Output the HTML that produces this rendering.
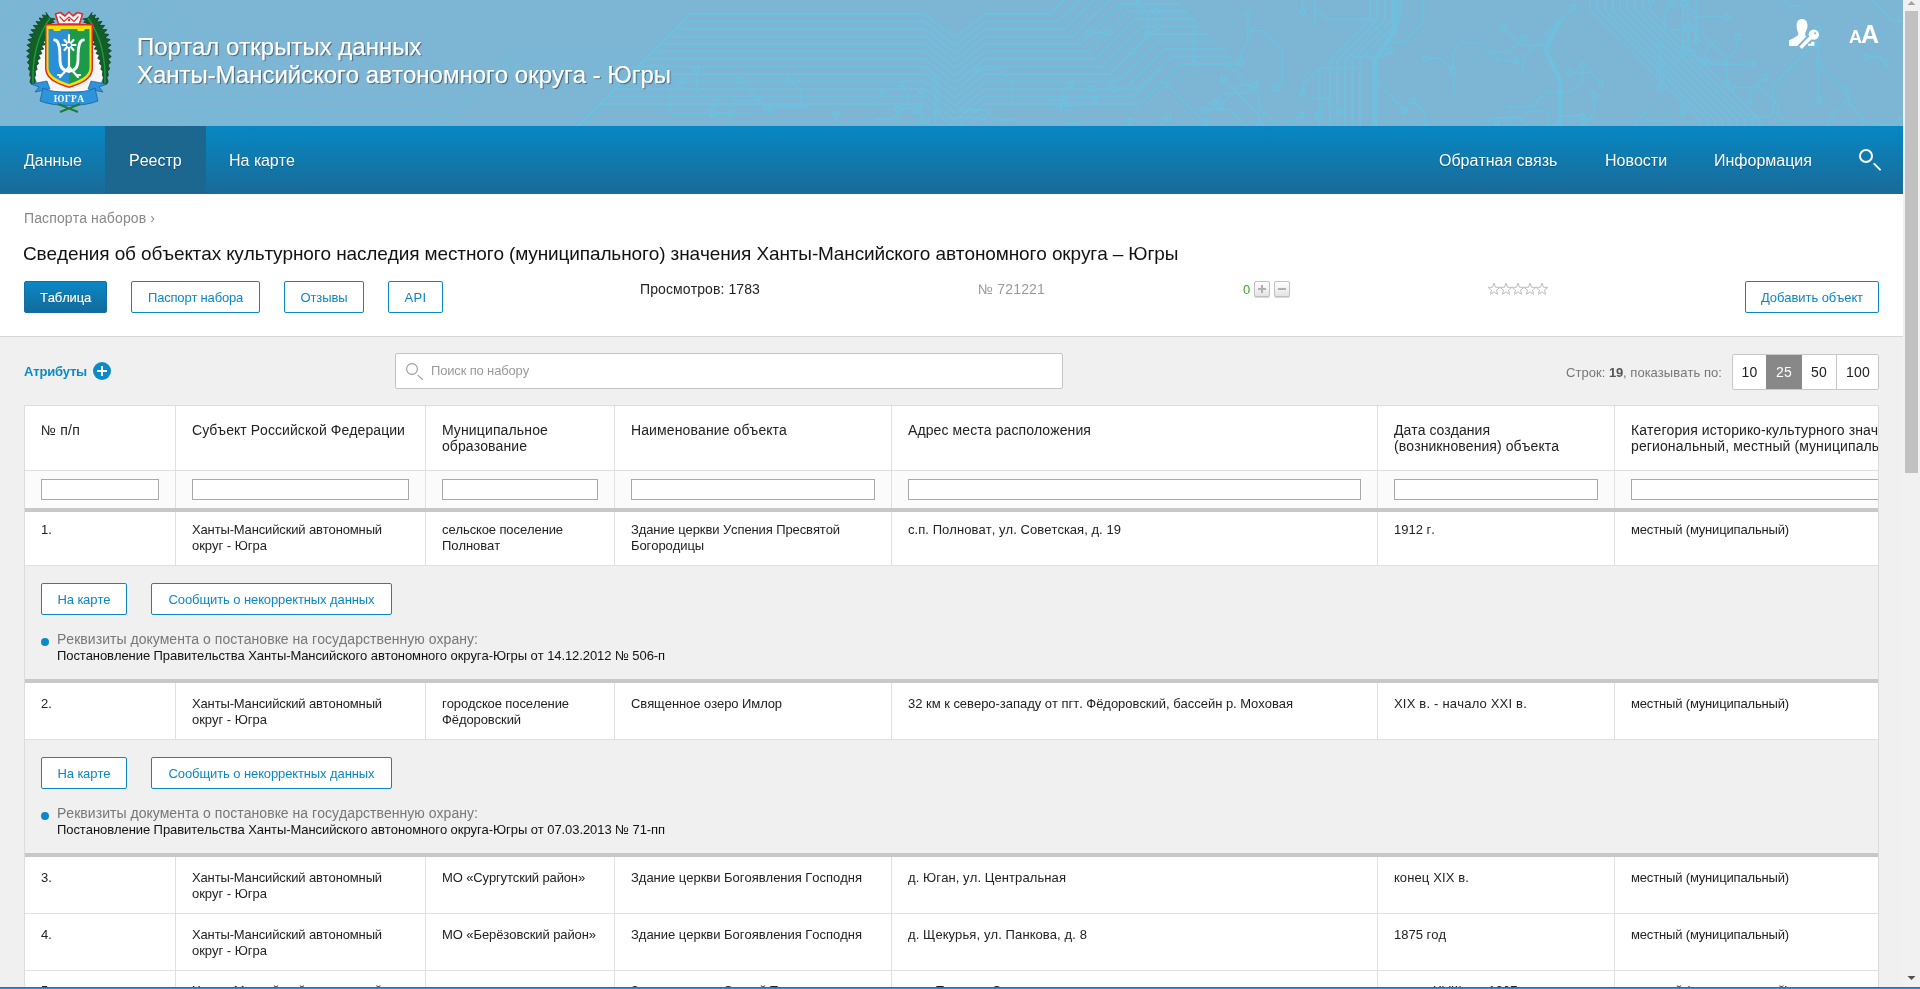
<!DOCTYPE html>
<html><head><meta charset="utf-8">
<style>
*{box-sizing:border-box;margin:0;padding:0}
html,body{width:1920px;height:989px;overflow:hidden;background:#f0f0f0;font-family:"Liberation Sans",sans-serif;color:#222;font-kerning:none}
.abs{position:absolute}
#hdr{position:absolute;left:0;top:0;width:1903px;height:126px;background:#7db5d5;overflow:hidden}
#nav{position:absolute;left:0;top:126px;width:1903px;height:68px;background:linear-gradient(#0787c4,#1a6b97)}
#nav .it{position:absolute;top:1px;height:68px;line-height:68px;font-size:16px;color:#fff;text-shadow:0 1px 1px rgba(0,0,0,.3)}
#top{position:absolute;left:0;top:194px;width:1903px;height:143px;background:#fff;border-bottom:1px solid #d6d6d6}
.btn{position:absolute;height:32px;line-height:31px;border:1px solid #0b87c6;border-radius:2px;color:#0b87c6;font-size:13px;text-align:center;background:#fff}
#sb{position:absolute;left:1903px;top:0;width:17px;height:989px;background:#f1f1f1}
table{border-collapse:collapse}
#tbl{position:absolute;left:24px;top:405px;width:1855px;height:584px;overflow:hidden;border-top:1px solid #dcdcdc;border-left:1px solid #dcdcdc;border-right:1px solid #dcdcdc}
#tbl>div{position:absolute}
#tbl .r{left:0;width:1855px}
#tbl .hl{left:0;width:1855px;height:1px;background:#e0e0e0}
#tbl .vl{width:1px;background:#e0e0e0}
#tbl .tk{left:0;width:1855px;height:4px;background:#c8c8c8}
#tbl .th{font-size:14px;line-height:16px;color:#222;white-space:nowrap}
#tbl .td{font-size:13px;line-height:16px;color:#222;white-space:nowrap}
#tbl .fi{height:21px;border:1px solid #a9a9a9;background:#fff}
#tbl .dot{width:8px;height:8px;border-radius:50%;background:#0a88c8}
#tbl .dl{font-size:14px;line-height:16px;color:#777;white-space:nowrap}
#tbl .dd{font-size:13px;line-height:16px;color:#111;white-space:nowrap}
#tb{position:absolute;left:0;top:337px;width:1903px;height:68px}


.pm{position:absolute;width:16px;height:16px;border:1px solid #c0c0c0;border-radius:2px;background:linear-gradient(#fff,#e4e4e4);box-shadow:0 1px 0 #d8d8d8}
.pm i{position:absolute;background:#b0b0b0}
</style></head><body>
<div id="root" style="position:absolute;left:0;top:0;width:1920px;height:989px;will-change:transform">
<div id="hdr">
<svg class="abs" style="left:0;top:0" width="1903" height="126" viewBox="0 0 1903 126"><g stroke="#6fc0de" stroke-width="1" fill="none" opacity="0.55"><path d="M-144.0,0.0 L-18.0,126.0"/><path d="M-135.0,0.0 L-9.0,126.0"/><path d="M-126.0,0.0 L0.0,126.0"/><path d="M-117.0,0.0 L9.0,126.0"/><path d="M-108.0,0.0 L18.0,126.0"/><path d="M-99.0,0.0 L27.0,126.0"/><path d="M-90.0,0.0 L36.0,126.0"/><path d="M-81.0,0.0 L45.0,126.0"/><path d="M-72.0,0.0 L54.0,126.0"/><path d="M-63.0,0.0 L63.0,126.0"/><path d="M-54.0,0.0 L72.0,126.0"/><path d="M-45.0,0.0 L81.0,126.0"/><path d="M-36.0,0.0 L90.0,126.0"/><path d="M-27.0,0.0 L99.0,126.0"/><path d="M-18.0,0.0 L108.0,126.0"/><path d="M-9.0,0.0 L117.0,126.0"/><path d="M0.0,0.0 L126.0,126.0"/><path d="M9.0,0.0 L135.0,126.0"/><path d="M18.0,0.0 L144.0,126.0"/><path d="M27.0,0.0 L153.0,126.0"/><path d="M36.0,0.0 L162.0,126.0"/><path d="M45.0,0.0 L171.0,126.0"/><path d="M54.0,0.0 L180.0,126.0"/><path d="M63.0,0.0 L189.0,126.0"/><path d="M72.0,0.0 L198.0,126.0"/><path d="M81.0,0.0 L207.0,126.0"/><path d="M90.0,0.0 L216.0,126.0"/><path d="M99.0,0.0 L225.0,126.0"/><path d="M108.0,0.0 L234.0,126.0"/><path d="M117.0,0.0 L243.0,126.0"/><path d="M126.0,0.0 L252.0,126.0"/><path d="M135.0,0.0 L261.0,126.0"/><path d="M144.0,0.0 L270.0,126.0"/><path d="M153.0,0.0 L279.0,126.0"/><path d="M162.0,0.0 L288.0,126.0"/><path d="M171.0,0.0 L297.0,126.0"/><path d="M180.0,0.0 L306.0,126.0"/><path d="M189.0,0.0 L315.0,126.0"/><path d="M198.0,0.0 L324.0,126.0"/><path d="M207.0,0.0 L333.0,126.0"/></g><g stroke="#6fc0de" stroke-width="1.6" fill="none" opacity="0.5"><path d="M140.0,96.0 L470.0,96.0 L520.0,46.0 L640.0,46.0"/><path d="M140.0,103.5 L462.5,103.5 L512.5,53.5 L640.0,53.5"/><path d="M140.0,111.0 L455.0,111.0 L505.0,61.0 L640.0,61.0"/><path d="M140.0,118.5 L447.5,118.5 L497.5,68.5 L640.0,68.5"/><path d="M140.0,126.0 L440.0,126.0 L490.0,76.0 L640.0,76.0"/><path d="M140.0,133.5 L432.5,133.5 L482.5,83.5 L640.0,83.5"/></g><g stroke="#6fc0de" stroke-width="1.8" fill="none"><path d="M620.0,84.0 L690.0,14.0 L925.0,14.0 L955.0,38.0 L985.0,14.0 L1050.0,14.0 L1090.0,-26.0 L1150.0,-26.0"/><path d="M612.5,91.5 L682.5,21.5 L925.0,21.5 L955.0,45.5 L985.0,21.5 L1057.5,21.5 L1097.5,-18.5 L1157.5,-18.5"/><path d="M605.0,99.0 L675.0,29.0 L925.0,29.0 L955.0,53.0 L985.0,29.0 L1065.0,29.0 L1105.0,-11.0 L1165.0,-11.0"/><path d="M597.5,106.5 L667.5,36.5 L925.0,36.5 L955.0,60.5 L985.0,36.5 L1072.5,36.5 L1112.5,-3.5 L1172.5,-3.5"/><path d="M590.0,114.0 L660.0,44.0 L925.0,44.0 L955.0,68.0 L985.0,44.0 L1080.0,44.0 L1120.0,4.0 L1180.0,4.0"/><path d="M582.5,121.5 L652.5,51.5 L925.0,51.5 L955.0,75.5 L985.0,51.5 L1087.5,51.5 L1127.5,11.5 L1187.5,11.5"/><path d="M575.0,129.0 L645.0,59.0 L925.0,59.0 L955.0,83.0 L985.0,59.0 L1095.0,59.0 L1135.0,19.0 L1195.0,19.0"/><path d="M567.5,136.5 L637.5,66.5 L925.0,66.5 L955.0,90.5 L985.0,66.5 L1102.5,66.5 L1142.5,26.5 L1202.5,26.5"/><path d="M560.0,144.0 L630.0,74.0 L925.0,74.0 L955.0,98.0 L985.0,74.0 L1110.0,74.0 L1150.0,34.0 L1210.0,34.0"/><path d="M552.5,151.5 L622.5,81.5 L925.0,81.5 L955.0,105.5 L985.0,81.5 L1117.5,81.5 L1157.5,41.5 L1217.5,41.5"/><path d="M545.0,159.0 L615.0,89.0 L925.0,89.0 L955.0,113.0 L985.0,89.0 L1125.0,89.0 L1165.0,49.0 L1225.0,49.0"/><path d="M537.5,166.5 L607.5,96.5 L925.0,96.5 L955.0,120.5 L985.0,96.5 L1132.5,96.5 L1172.5,56.5 L1232.5,56.5"/><path d="M530.0,174.0 L600.0,104.0 L925.0,104.0 L955.0,128.0 L985.0,104.0 L1140.0,104.0 L1180.0,64.0 L1240.0,64.0"/><path d="M1590.0,0.0 L1590.0,10.0 L1700.0,120.0 L1700.0,126.0"/><path d="M1597.5,0.0 L1597.5,10.0 L1707.5,120.0 L1707.5,126.0"/><path d="M1605.0,0.0 L1605.0,10.0 L1715.0,120.0 L1715.0,126.0"/><path d="M1612.5,0.0 L1612.5,10.0 L1722.5,120.0 L1722.5,126.0"/><path d="M1620.0,0.0 L1620.0,10.0 L1730.0,120.0 L1730.0,126.0"/><path d="M1627.5,0.0 L1627.5,10.0 L1737.5,120.0 L1737.5,126.0"/><path d="M1635.0,0.0 L1635.0,10.0 L1745.0,120.0 L1745.0,126.0"/><path d="M1642.5,0.0 L1642.5,10.0 L1752.5,120.0 L1752.5,126.0"/><path d="M1650.0,0.0 L1650.0,10.0 L1760.0,120.0 L1760.0,126.0"/><path d="M1330.0,126.0 L1330.0,60.0 L1370.0,20.0 L1370.0,-2.0"/><path d="M1337.5,126.0 L1337.5,60.0 L1377.5,20.0 L1377.5,-2.0"/><path d="M1345.0,126.0 L1345.0,60.0 L1385.0,20.0 L1385.0,-2.0"/><path d="M1352.5,126.0 L1352.5,60.0 L1392.5,20.0 L1392.5,-2.0"/><path d="M1360.0,126.0 L1360.0,60.0 L1400.0,20.0 L1400.0,-2.0"/><path d="M1452.9,70.5 L1452.9,51.4 L1461.5,42.7 L1479.9,42.7 L1497.9,60.7 L1515.8,60.7"/><path d="M1731.5,87.4 L1760.7,87.4 L1777.9,104.5 L1777.9,116.0 L1796.5,134.6"/><path d="M1248.4,30.5 L1263.5,30.5 L1282.3,49.2 L1282.3,62.4 L1282.3,81.4 L1275.3,88.4"/><path d="M1878.2,125.5 L1893.1,125.5 L1906.7,111.8"/><path d="M1697.7,50.5 L1688.2,50.5 L1669.4,69.3 L1669.4,82.0 L1682.4,95.0 L1682.4,111.7"/><path d="M1254.8,85.0 L1240.0,85.0 L1219.3,105.7"/><path d="M1651.5,1.4 L1651.5,-10.5"/><path d="M1496.9,124.1 L1496.9,146.3"/><path d="M1872.2,0.1 L1893.4,21.2 L1906.1,21.2"/><path d="M1569.6,72.7 L1582.3,72.7 L1590.5,72.7 L1601.3,83.5"/><path d="M1157.9,26.3 L1152.0,32.2 L1140.6,43.6 L1133.0,51.3"/><path d="M1548.2,109.2 L1548.2,124.0 L1566.5,142.4"/><path d="M1223.6,79.3 L1240.0,95.6 L1259.3,115.0 L1259.3,124.7"/><path d="M1130.2,121.3 L1130.2,135.0"/><path d="M1505.7,117.1 L1518.7,117.1 L1534.5,132.9"/><path d="M1318.6,115.6 L1318.6,125.1 L1318.6,142.9"/><path d="M1319.9,66.9 L1319.9,82.9 L1319.9,112.4"/><path d="M1507.1,119.3 L1527.1,139.3"/><path d="M1646.8,121.3 L1665.4,121.3 L1675.9,131.8"/><path d="M1158.7,68.8 L1139.0,88.5 L1114.8,88.5"/><path d="M1813.7,44.3 L1794.0,64.0 L1773.7,84.3 L1773.7,111.3 L1767.8,117.2 L1751.4,117.2"/><path d="M1156.4,11.4 L1183.7,11.4 L1194.5,22.2 L1194.5,45.5 L1194.5,63.2"/><path d="M1685.2,3.8 L1698.3,16.9 L1727.4,16.9"/><path d="M1579.3,116.0 L1563.2,116.0 L1547.0,132.2"/><path d="M1687.9,43.2 L1687.9,15.5 L1687.9,-1.4 L1687.9,-13.7"/><path d="M1688.6,25.2 L1688.6,38.1 L1688.6,50.7 L1702.0,64.1 L1725.6,64.1 L1751.7,64.1"/><path d="M1314.6,27.0 L1314.6,5.2 L1314.6,-17.6"/><path d="M1866.0,57.0 L1880.1,57.0 L1886.4,63.3"/><path d="M1376.3,81.8 L1391.9,97.4 L1404.6,110.2"/><path d="M1307.8,98.2 L1325.6,98.2 L1339.6,112.2"/><path d="M1847.6,86.2 L1847.6,99.9 L1841.8,105.7 L1827.8,119.7 L1827.8,131.6"/><path d="M1521.0,119.3 L1532.7,131.1"/><path d="M1168.0,117.5 L1160.3,125.2 L1151.6,133.9"/><path d="M1543.7,110.8 L1528.5,110.8 L1521.3,118.0 L1493.0,118.0 L1484.0,127.0 L1463.1,147.9"/><path d="M1716.8,40.4 L1705.7,51.4 L1705.7,60.3"/><path d="M1699.2,61.4 L1725.0,61.4 L1737.4,49.1 L1737.4,37.3"/><path d="M1814.5,59.3 L1834.9,79.7 L1849.5,94.3 L1849.5,104.2 L1862.0,116.7 L1862.0,131.1"/><path d="M1228.2,64.8 L1238.7,75.3 L1259.2,95.8 L1259.2,108.4 L1279.9,129.1"/><path d="M1488.2,51.8 L1509.5,51.8 L1523.5,37.8"/><path d="M1412.5,100.9 L1425.8,114.2 L1425.8,125.9"/><path d="M1818.2,100.8 L1818.2,87.4 L1818.2,76.6 L1818.2,48.8 L1818.2,29.3"/><path d="M1582.0,116.6 L1582.0,125.4 L1591.2,134.6"/><path d="M1664.4,30.8 L1664.4,11.8 L1672.0,4.2"/><path d="M1659.8,88.4 L1659.8,72.1 L1659.8,46.0"/><path d="M1259.3,79.5 L1245.4,93.4 L1224.0,93.4 L1214.7,102.7"/><path d="M1371.1,22.8 L1390.6,42.3 L1403.4,42.3 L1422.9,22.9 L1422.9,-4.7"/><path d="M1302.4,12.2 L1302.4,-0.2 L1318.7,-16.5"/><path d="M1544.5,45.1 L1521.0,45.1 L1503.6,27.6"/><path d="M1749.7,101.2 L1749.7,92.6 L1764.9,77.4"/><path d="M1247.9,14.5 L1247.9,44.3 L1240.7,51.4 L1240.7,62.4"/><path d="M1696.5,41.2 L1696.5,21.8 L1696.5,9.2 L1696.5,0.9 L1702.8,-5.4"/><path d="M1454.1,93.2 L1454.1,71.8 L1440.5,58.2 L1425.3,58.2"/><path d="M1649.6,108.5 L1635.1,123.0 L1635.1,142.1"/><path d="M1301.4,114.8 L1283.1,133.2"/><path d="M1357.3,67.9 L1332.5,67.9 L1319.9,67.9 L1313.2,74.7 L1302.8,85.0 L1302.8,93.2"/><path d="M1804.1,6.2 L1788.7,6.2 L1776.7,-5.7"/><path d="M1403.9,126.0 L1387.3,142.6"/><path d="M1117.8,77.5 L1108.2,87.2 L1094.6,100.7"/><path d="M1108.4,32.6 L1088.3,32.6"/><path d="M1506.1,106.6 L1531.9,106.6 L1546.1,92.4 L1570.8,92.4 L1582.5,80.8 L1582.5,64.3"/><path d="M1522.7,75.2 L1522.7,57.9 L1534.6,46.1 L1545.9,34.7 L1559.1,21.5 L1573.5,7.2"/><path d="M1683.2,3.4 L1683.2,25.3 L1683.2,49.9"/><path d="M1345.8,50.1 L1352.6,56.9 L1370.1,56.9 L1383.6,56.9 L1389.9,50.6"/><path d="M1663.7,59.0 L1663.7,68.1 L1663.7,86.1"/><path d="M1378.2,19.5 L1367.1,19.5 L1349.1,19.5 L1327.1,19.5 L1314.9,7.3 L1314.9,-12.4"/><path d="M1672.7,30.0 L1698.0,30.0 L1716.8,48.9 L1726.7,58.7 L1726.7,82.7"/><path d="M1593.8,94.9 L1593.8,114.0 L1573.9,133.9"/><path d="M1147.4,34.1 L1147.4,12.4 L1138.3,3.3"/><path d="M1167.4,85.2 L1182.9,100.7 L1196.1,113.9 L1205.0,122.8"/><path d="M1204.0,109.6 L1229.8,109.6 L1248.5,128.3 L1266.3,128.3 L1276.0,137.9"/><path d="M947.6,125.6 L930.3,125.6 L914.7,110.0"/><path d="M848.2,103.3 L871.0,103.3 L883.2,91.1"/><path d="M908.3,107.5 L908.3,94.4 L901.7,87.8"/><path d="M1060.7,111.7 L1060.7,95.3 L1070.3,85.7"/><path d="M756.3,113.7 L732.8,113.7 L712.8,113.7"/><path d="M921.7,122.5 L921.7,107.0 L921.7,91.2"/><path d="M835.8,123.6 L835.8,114.2"/><path d="M670.6,114.4 L670.6,92.8 L683.0,80.4"/><path d="M897.8,120.1 L897.8,109.1"/><path d="M1047.6,100.1 L1064.4,100.1"/><path d="M729.8,100.7 L752.1,100.7 L761.2,100.7 L770.5,110.0"/><path d="M697.0,92.9 L697.0,69.7"/><path d="M671.4,113.5 L693.3,113.5 L705.5,113.5 L717.0,102.0"/><path d="M808.8,106.5 L787.1,106.5 L767.6,106.5"/><path d="M874.7,119.0 L893.2,119.0 L903.8,108.4 L917.8,108.4"/><path d="M1014.6,120.0 L995.7,120.0 L985.7,110.0 L964.1,110.0"/><path d="M1066.4,123.0 L1077.1,123.0 L1087.3,133.1"/><path d="M801.2,104.0 L801.2,91.4 L789.9,80.0"/><path d="M710.5,113.3 L731.3,113.3"/><path d="M917.0,122.7 L926.8,122.7 L936.8,112.8"/><path d="M763.6,115.8 L763.6,104.0 L747.2,87.6 L739.4,79.9"/><path d="M935.8,123.9 L935.8,101.4 L935.8,78.3"/><path d="M950.5,117.8 L973.2,117.8 L982.0,117.8"/><path d="M1012.6,103.9 L1012.6,82.7 L999.1,69.1 L975.9,69.1"/><path d="M1058.3,106.2 L1073.5,106.2 L1084.1,95.5 L1091.5,88.1"/></g><g stroke="#6fc0de" stroke-width="5" fill="none" stroke-linejoin="round"><path d="M1395.0,0.0 L1395.0,30.0 L1375.0,60.0 L1375.0,126.0"/><path d="M1560.0,20.0 L1545.0,50.0 L1560.0,80.0 L1560.0,126.0"/></g><g fill="#6fc0de"><circle cx="1515.8" cy="60.7" r="3.6"/><circle cx="1452.9" cy="70.5" r="3.6"/><circle cx="1796.5" cy="134.6" r="3.6"/><circle cx="1731.5" cy="87.4" r="3.6"/><circle cx="1275.3" cy="88.4" r="3.6"/><circle cx="1248.4" cy="30.5" r="3.6"/><circle cx="1906.7" cy="111.8" r="3.6"/><circle cx="1878.2" cy="125.5" r="3.6"/><circle cx="1682.4" cy="111.7" r="3.6"/><circle cx="1219.3" cy="105.7" r="3.6"/><circle cx="1254.8" cy="85.0" r="3.6"/><circle cx="1651.5" cy="-10.5" r="3.6"/><circle cx="1651.5" cy="1.4" r="3.6"/><circle cx="1496.9" cy="146.3" r="3.6"/><circle cx="1496.9" cy="124.1" r="3.6"/><circle cx="1906.1" cy="21.2" r="3.6"/><circle cx="1601.3" cy="83.5" r="3.6"/><circle cx="1569.6" cy="72.7" r="3.6"/><circle cx="1133.0" cy="51.3" r="3.6"/><circle cx="1157.9" cy="26.3" r="3.6"/><circle cx="1566.5" cy="142.4" r="3.6"/><circle cx="1259.3" cy="124.7" r="3.6"/><circle cx="1223.6" cy="79.3" r="3.6"/><circle cx="1130.2" cy="135.0" r="3.6"/><circle cx="1130.2" cy="121.3" r="3.6"/><circle cx="1534.5" cy="132.9" r="3.6"/><circle cx="1318.6" cy="142.9" r="3.6"/><circle cx="1318.6" cy="115.6" r="3.6"/><circle cx="1319.9" cy="112.4" r="3.6"/><circle cx="1527.1" cy="139.3" r="3.6"/><circle cx="1675.9" cy="131.8" r="3.6"/><circle cx="1114.8" cy="88.5" r="3.6"/><circle cx="1751.4" cy="117.2" r="3.6"/><circle cx="1813.7" cy="44.3" r="3.6"/><circle cx="1194.5" cy="63.2" r="3.6"/><circle cx="1156.4" cy="11.4" r="3.6"/><circle cx="1727.4" cy="16.9" r="3.6"/><circle cx="1685.2" cy="3.8" r="3.6"/><circle cx="1547.0" cy="132.2" r="3.6"/><circle cx="1687.9" cy="-13.7" r="3.6"/><circle cx="1751.7" cy="64.1" r="3.6"/><circle cx="1688.6" cy="25.2" r="3.6"/><circle cx="1314.6" cy="-17.6" r="3.6"/><circle cx="1886.4" cy="63.3" r="3.6"/><circle cx="1866.0" cy="57.0" r="3.6"/><circle cx="1404.6" cy="110.2" r="3.6"/><circle cx="1339.6" cy="112.2" r="3.6"/><circle cx="1827.8" cy="131.6" r="3.6"/><circle cx="1532.7" cy="131.1" r="3.6"/><circle cx="1151.6" cy="133.9" r="3.6"/><circle cx="1168.0" cy="117.5" r="3.6"/><circle cx="1463.1" cy="147.9" r="3.6"/><circle cx="1705.7" cy="60.3" r="3.6"/><circle cx="1737.4" cy="37.3" r="3.6"/><circle cx="1862.0" cy="131.1" r="3.6"/><circle cx="1279.9" cy="129.1" r="3.6"/><circle cx="1228.2" cy="64.8" r="3.6"/><circle cx="1523.5" cy="37.8" r="3.6"/><circle cx="1425.8" cy="125.9" r="3.6"/><circle cx="1412.5" cy="100.9" r="3.6"/><circle cx="1818.2" cy="29.3" r="3.6"/><circle cx="1818.2" cy="100.8" r="3.6"/><circle cx="1591.2" cy="134.6" r="3.6"/><circle cx="1582.0" cy="116.6" r="3.6"/><circle cx="1672.0" cy="4.2" r="3.6"/><circle cx="1659.8" cy="46.0" r="3.6"/><circle cx="1659.8" cy="88.4" r="3.6"/><circle cx="1214.7" cy="102.7" r="3.6"/><circle cx="1422.9" cy="-4.7" r="3.6"/><circle cx="1318.7" cy="-16.5" r="3.6"/><circle cx="1302.4" cy="12.2" r="3.6"/><circle cx="1503.6" cy="27.6" r="3.6"/><circle cx="1764.9" cy="77.4" r="3.6"/><circle cx="1749.7" cy="101.2" r="3.6"/><circle cx="1240.7" cy="62.4" r="3.6"/><circle cx="1247.9" cy="14.5" r="3.6"/><circle cx="1702.8" cy="-5.4" r="3.6"/><circle cx="1696.5" cy="41.2" r="3.6"/><circle cx="1425.3" cy="58.2" r="3.6"/><circle cx="1635.1" cy="142.1" r="3.6"/><circle cx="1283.1" cy="133.2" r="3.6"/><circle cx="1301.4" cy="114.8" r="3.6"/><circle cx="1302.8" cy="93.2" r="3.6"/><circle cx="1776.7" cy="-5.7" r="3.6"/><circle cx="1387.3" cy="142.6" r="3.6"/><circle cx="1094.6" cy="100.7" r="3.6"/><circle cx="1088.3" cy="32.6" r="3.6"/><circle cx="1108.4" cy="32.6" r="3.6"/><circle cx="1582.5" cy="64.3" r="3.6"/><circle cx="1573.5" cy="7.2" r="3.6"/><circle cx="1683.2" cy="49.9" r="3.6"/><circle cx="1683.2" cy="3.4" r="3.6"/><circle cx="1389.9" cy="50.6" r="3.6"/><circle cx="1663.7" cy="86.1" r="3.6"/><circle cx="1314.9" cy="-12.4" r="3.6"/><circle cx="1726.7" cy="82.7" r="3.6"/><circle cx="1573.9" cy="133.9" r="3.6"/><circle cx="1593.8" cy="94.9" r="3.6"/><circle cx="1138.3" cy="3.3" r="3.6"/><circle cx="1147.4" cy="34.1" r="3.6"/><circle cx="1205.0" cy="122.8" r="3.6"/><circle cx="1167.4" cy="85.2" r="3.6"/><circle cx="1276.0" cy="137.9" r="3.6"/><circle cx="1204.0" cy="109.6" r="3.6"/><circle cx="914.7" cy="110.0" r="3.6"/><circle cx="883.2" cy="91.1" r="3.6"/><circle cx="901.7" cy="87.8" r="3.6"/><circle cx="1070.3" cy="85.7" r="3.6"/><circle cx="712.8" cy="113.7" r="3.6"/><circle cx="921.7" cy="91.2" r="3.6"/><circle cx="835.8" cy="114.2" r="3.6"/><circle cx="683.0" cy="80.4" r="3.6"/><circle cx="897.8" cy="109.1" r="3.6"/><circle cx="1064.4" cy="100.1" r="3.6"/><circle cx="770.5" cy="110.0" r="3.6"/><circle cx="697.0" cy="69.7" r="3.6"/><circle cx="717.0" cy="102.0" r="3.6"/><circle cx="767.6" cy="106.5" r="3.6"/><circle cx="917.8" cy="108.4" r="3.6"/><circle cx="964.1" cy="110.0" r="3.6"/><circle cx="1087.3" cy="133.1" r="3.6"/><circle cx="789.9" cy="80.0" r="3.6"/><circle cx="731.3" cy="113.3" r="3.6"/><circle cx="936.8" cy="112.8" r="3.6"/><circle cx="739.4" cy="79.9" r="3.6"/><circle cx="935.8" cy="78.3" r="3.6"/><circle cx="982.0" cy="117.8" r="3.6"/><circle cx="975.9" cy="69.1" r="3.6"/><circle cx="1091.5" cy="88.1" r="3.6"/></g><g fill="#7db5d5"><circle cx="1515.8" cy="60.7" r="1.4"/><circle cx="1452.9" cy="70.5" r="1.4"/><circle cx="1796.5" cy="134.6" r="1.4"/><circle cx="1731.5" cy="87.4" r="1.4"/><circle cx="1275.3" cy="88.4" r="1.4"/><circle cx="1248.4" cy="30.5" r="1.4"/><circle cx="1906.7" cy="111.8" r="1.4"/><circle cx="1878.2" cy="125.5" r="1.4"/><circle cx="1682.4" cy="111.7" r="1.4"/><circle cx="1219.3" cy="105.7" r="1.4"/><circle cx="1254.8" cy="85.0" r="1.4"/><circle cx="1651.5" cy="-10.5" r="1.4"/><circle cx="1651.5" cy="1.4" r="1.4"/><circle cx="1496.9" cy="146.3" r="1.4"/><circle cx="1496.9" cy="124.1" r="1.4"/><circle cx="1906.1" cy="21.2" r="1.4"/><circle cx="1601.3" cy="83.5" r="1.4"/><circle cx="1569.6" cy="72.7" r="1.4"/><circle cx="1133.0" cy="51.3" r="1.4"/><circle cx="1157.9" cy="26.3" r="1.4"/><circle cx="1566.5" cy="142.4" r="1.4"/><circle cx="1259.3" cy="124.7" r="1.4"/><circle cx="1223.6" cy="79.3" r="1.4"/><circle cx="1130.2" cy="135.0" r="1.4"/><circle cx="1130.2" cy="121.3" r="1.4"/><circle cx="1534.5" cy="132.9" r="1.4"/><circle cx="1318.6" cy="142.9" r="1.4"/><circle cx="1318.6" cy="115.6" r="1.4"/><circle cx="1319.9" cy="112.4" r="1.4"/><circle cx="1527.1" cy="139.3" r="1.4"/><circle cx="1675.9" cy="131.8" r="1.4"/><circle cx="1114.8" cy="88.5" r="1.4"/><circle cx="1751.4" cy="117.2" r="1.4"/><circle cx="1813.7" cy="44.3" r="1.4"/><circle cx="1194.5" cy="63.2" r="1.4"/><circle cx="1156.4" cy="11.4" r="1.4"/><circle cx="1727.4" cy="16.9" r="1.4"/><circle cx="1685.2" cy="3.8" r="1.4"/><circle cx="1547.0" cy="132.2" r="1.4"/><circle cx="1687.9" cy="-13.7" r="1.4"/><circle cx="1751.7" cy="64.1" r="1.4"/><circle cx="1688.6" cy="25.2" r="1.4"/><circle cx="1314.6" cy="-17.6" r="1.4"/><circle cx="1886.4" cy="63.3" r="1.4"/><circle cx="1866.0" cy="57.0" r="1.4"/><circle cx="1404.6" cy="110.2" r="1.4"/><circle cx="1339.6" cy="112.2" r="1.4"/><circle cx="1827.8" cy="131.6" r="1.4"/><circle cx="1532.7" cy="131.1" r="1.4"/><circle cx="1151.6" cy="133.9" r="1.4"/><circle cx="1168.0" cy="117.5" r="1.4"/><circle cx="1463.1" cy="147.9" r="1.4"/><circle cx="1705.7" cy="60.3" r="1.4"/><circle cx="1737.4" cy="37.3" r="1.4"/><circle cx="1862.0" cy="131.1" r="1.4"/><circle cx="1279.9" cy="129.1" r="1.4"/><circle cx="1228.2" cy="64.8" r="1.4"/><circle cx="1523.5" cy="37.8" r="1.4"/><circle cx="1425.8" cy="125.9" r="1.4"/><circle cx="1412.5" cy="100.9" r="1.4"/><circle cx="1818.2" cy="29.3" r="1.4"/><circle cx="1818.2" cy="100.8" r="1.4"/><circle cx="1591.2" cy="134.6" r="1.4"/><circle cx="1582.0" cy="116.6" r="1.4"/><circle cx="1672.0" cy="4.2" r="1.4"/><circle cx="1659.8" cy="46.0" r="1.4"/><circle cx="1659.8" cy="88.4" r="1.4"/><circle cx="1214.7" cy="102.7" r="1.4"/><circle cx="1422.9" cy="-4.7" r="1.4"/><circle cx="1318.7" cy="-16.5" r="1.4"/><circle cx="1302.4" cy="12.2" r="1.4"/><circle cx="1503.6" cy="27.6" r="1.4"/><circle cx="1764.9" cy="77.4" r="1.4"/><circle cx="1749.7" cy="101.2" r="1.4"/><circle cx="1240.7" cy="62.4" r="1.4"/><circle cx="1247.9" cy="14.5" r="1.4"/><circle cx="1702.8" cy="-5.4" r="1.4"/><circle cx="1696.5" cy="41.2" r="1.4"/><circle cx="1425.3" cy="58.2" r="1.4"/><circle cx="1635.1" cy="142.1" r="1.4"/><circle cx="1283.1" cy="133.2" r="1.4"/><circle cx="1301.4" cy="114.8" r="1.4"/><circle cx="1302.8" cy="93.2" r="1.4"/><circle cx="1776.7" cy="-5.7" r="1.4"/><circle cx="1387.3" cy="142.6" r="1.4"/><circle cx="1094.6" cy="100.7" r="1.4"/><circle cx="1088.3" cy="32.6" r="1.4"/><circle cx="1108.4" cy="32.6" r="1.4"/><circle cx="1582.5" cy="64.3" r="1.4"/><circle cx="1573.5" cy="7.2" r="1.4"/><circle cx="1683.2" cy="49.9" r="1.4"/><circle cx="1683.2" cy="3.4" r="1.4"/><circle cx="1389.9" cy="50.6" r="1.4"/><circle cx="1663.7" cy="86.1" r="1.4"/><circle cx="1314.9" cy="-12.4" r="1.4"/><circle cx="1726.7" cy="82.7" r="1.4"/><circle cx="1573.9" cy="133.9" r="1.4"/><circle cx="1593.8" cy="94.9" r="1.4"/><circle cx="1138.3" cy="3.3" r="1.4"/><circle cx="1147.4" cy="34.1" r="1.4"/><circle cx="1205.0" cy="122.8" r="1.4"/><circle cx="1167.4" cy="85.2" r="1.4"/><circle cx="1276.0" cy="137.9" r="1.4"/><circle cx="1204.0" cy="109.6" r="1.4"/><circle cx="914.7" cy="110.0" r="1.4"/><circle cx="883.2" cy="91.1" r="1.4"/><circle cx="901.7" cy="87.8" r="1.4"/><circle cx="1070.3" cy="85.7" r="1.4"/><circle cx="712.8" cy="113.7" r="1.4"/><circle cx="921.7" cy="91.2" r="1.4"/><circle cx="835.8" cy="114.2" r="1.4"/><circle cx="683.0" cy="80.4" r="1.4"/><circle cx="897.8" cy="109.1" r="1.4"/><circle cx="1064.4" cy="100.1" r="1.4"/><circle cx="770.5" cy="110.0" r="1.4"/><circle cx="697.0" cy="69.7" r="1.4"/><circle cx="717.0" cy="102.0" r="1.4"/><circle cx="767.6" cy="106.5" r="1.4"/><circle cx="917.8" cy="108.4" r="1.4"/><circle cx="964.1" cy="110.0" r="1.4"/><circle cx="1087.3" cy="133.1" r="1.4"/><circle cx="789.9" cy="80.0" r="1.4"/><circle cx="731.3" cy="113.3" r="1.4"/><circle cx="936.8" cy="112.8" r="1.4"/><circle cx="739.4" cy="79.9" r="1.4"/><circle cx="935.8" cy="78.3" r="1.4"/><circle cx="982.0" cy="117.8" r="1.4"/><circle cx="975.9" cy="69.1" r="1.4"/><circle cx="1091.5" cy="88.1" r="1.4"/></g></svg>
<svg width="98" height="108" viewBox="0 0 98 108" style="position:absolute;left:20px;top:8px">
<path d="M22,18 L16,28 L13,38 L12,50 L13,62 L16,72 L22,83 L76,83 L82,72 L85,62 L86,50 L85,38 L82,28 L76,18 Z" fill="#f6f6f6"/>
<polygon points="30.0,10.0 35.3,11.1 32.2,11.6 34.1,14.5 30.6,14.9 32.8,17.9 29.1,18.3 31.5,21.4 27.5,21.8 30.1,25.0 26.0,25.6 28.6,28.7 24.4,29.4 27.0,32.6 22.9,33.5 25.4,36.6 21.5,37.8 23.7,41.0 20.0,42.3 22.0,45.5 18.6,47.1 20.3,50.4 17.4,52.3 18.6,55.7 16.2,57.7 17.1,61.3 15.2,63.4 15.7,67.3 14.4,69.5 15.4,73.7 14.4,76.0 13.0,76.0 11.4,76.0 9.9,73.9 11.1,69.5 9.6,67.3 10.4,63.2 8.3,60.9 10.0,57.1 7.3,54.6 9.9,51.2 6.7,48.5 10.2,45.6 6.6,42.7 10.8,40.2 6.9,37.0 11.8,35.0 7.8,31.6 13.1,30.2 9.1,26.5 14.8,25.6 11.0,21.7 16.7,21.4 13.3,17.4 19.0,17.5 16.0,13.4 21.5,13.9 19.0,10.0 24.2,10.7 22.4,6.9 27.0,7.9 25.9,4.4" fill="#135f28" stroke="#08331a" stroke-width="0.7"/>
<path d="M30,10 C20,24 12,45 13,76" stroke="#1f9a40" stroke-width="1.4" fill="none"/>
<polygon points="68.0,10.0 62.7,11.1 65.8,11.6 63.9,14.5 67.4,14.9 65.2,17.9 68.9,18.3 66.5,21.4 70.5,21.8 67.9,25.0 72.0,25.6 69.4,28.7 73.6,29.4 71.0,32.6 75.1,33.5 72.6,36.6 76.5,37.8 74.3,41.0 78.0,42.3 76.0,45.5 79.4,47.1 77.7,50.4 80.6,52.3 79.4,55.7 81.8,57.7 80.9,61.3 82.8,63.4 82.3,67.3 83.6,69.5 82.6,73.7 83.6,76.0 85.0,76.0 86.6,76.0 88.1,73.9 86.9,69.5 88.4,67.3 87.6,63.2 89.7,60.9 88.0,57.1 90.7,54.6 88.1,51.2 91.3,48.5 87.8,45.6 91.4,42.7 87.2,40.2 91.1,37.0 86.2,35.0 90.2,31.6 84.9,30.2 88.9,26.5 83.2,25.6 87.0,21.7 81.3,21.4 84.7,17.4 79.0,17.5 82.0,13.4 76.5,13.9 79.0,10.0 73.8,10.7 75.6,6.9 71.0,7.9 72.1,4.4" fill="#135f28" stroke="#08331a" stroke-width="0.7"/>
<path d="M68,10 C78,24 86,45 85,76" stroke="#1f9a40" stroke-width="1.4" fill="none"/>
<path d="M35.5,6 L40.5,4.5 L45,8 L49,4 L53,8 L57.5,4.5 L62.5,6 L59.5,16 L38.5,16 Z" fill="#fff" stroke="#e42a2a" stroke-width="1.6" stroke-linejoin="round"/>
<path d="M39.5,8.5 L44,13.5 L49,9 L54,13.5 L58.5,8.5" stroke="#e42a2a" stroke-width="1.2" fill="none"/>
<circle cx="49" cy="12" r="1.2" fill="#e42a2a"/>
<path d="M25,16 L73,16 L73,60 C73,71 62,76 49,80 C36,76 25,71 25,60 Z" fill="#e32626"/>
<path d="M26.5,17.5 L71.5,17.5 L71.5,60 C71.5,70 61,75 49,78.5 C37,75 26.5,70 26.5,60 Z" fill="#f1e20a"/>
<path d="M28.5,21 L33,21 L34,23 L40,23 L41,21 L49,21 L49,76 C38,72 28.5,68 28.5,60 Z" fill="#2b8fd7"/>
<path d="M49,21 L57,21 L58,23 L64,23 L65,21 L69.5,21 L69.5,60 C69.5,68 60,72 49,76 Z" fill="#1d994a"/>
<g stroke="#fff" fill="none" stroke-linecap="round">
<path d="M34.5,32 C40,32 40,44 40,52 C40,60 44,63 49,63 C54,63 58,60 58,52 C58,44 58,32 63.5,32" stroke-width="2.8"/>
<path d="M49,27 L49,64 M42.5,37 L55.5,37 M44.5,32 L53.5,42 M53.5,32 L44.5,42" stroke-width="2.2"/>
<path d="M40,69 L49,59 L58,69 M38,67 L42,67 M56,67 L60,67" stroke-width="2.2"/>
</g>
<circle cx="49" cy="37" r="2.1" fill="#2b8fd7"/>
<path d="M11,76 L27,73 L30,81 L15,84 L19,79 Z" fill="#2d93da" stroke="#0f4f88" stroke-width="0.6"/>
<path d="M87,76 L71,73 L68,81 L83,84 L79,79 Z" fill="#2d93da" stroke="#0f4f88" stroke-width="0.6"/>
<path d="M23,80 C35,86 63,86 75,80 L78,93 C64,99 34,99 20,93 Z" fill="#2d93da" stroke="#0f4f88" stroke-width="0.6"/>
<text x="49" y="94" font-family="Liberation Serif" font-weight="bold" font-size="9.5" fill="#fff" text-anchor="middle" letter-spacing="0.3">ЮГРА</text>
<path d="M38,96 L58,104 M60,96 L40,104" stroke="#1f7d36" stroke-width="2"/>
</svg>

  <svg class="abs" style="left:1789px;top:19px" width="31" height="31" viewBox="0 0 31 31">
    <path d="M12.9,0 C9.5,0 7.6,2.6 7.6,6.6 C7.6,9.6 8.3,12 9.3,13.8 L9.3,16 C6.5,18.2 3,20 0,21.6 L0,27.1 L8.2,27.1 L17.3,17.6 C16.8,17.1 16.4,16.6 16.2,16 L16.2,13.8 C17.3,12 18.5,9.6 18.5,6.6 C18.5,2.6 16.3,0 12.9,0 Z" fill="#fff"/>
    <circle cx="24.8" cy="15.6" r="5.2" fill="#fff"/>
    <circle cx="26.2" cy="14.2" r="1" fill="#7db5d5"/>
    <path d="M22,18.3 L11.6,28.8" stroke="#fff" stroke-width="3.4" stroke-linecap="butt"/>
    <path d="M22.2,22.8 L25.4,22.8 L25.4,26.8 L19.1,26.8 L19.1,24.8 L22.2,24.8 Z" fill="#fff"/>
  </svg>
  <div class="abs" style="left:1849px;top:20px;font-weight:bold;color:#fff;white-space:nowrap;line-height:28px"><span style="font-size:18px">A</span><span style="font-size:25px;margin-left:-1px">A</span></div>

  <div class="abs" style="left:137px;top:33px;font-size:24px;line-height:28px;color:#fff;text-shadow:1px 1px 1px rgba(0,0,0,.5);-webkit-text-stroke:0.25px #fff">Портал открытых данных<br>Ханты-Мансийского автономного округа - Югры</div>
</div>
<div id="nav">
  <div class="abs" style="left:105px;top:0;width:101px;height:68px;background:#1c6790"></div>
  <div class="it" style="left:24px">Данные</div>
  <div class="it" style="left:129px">Реестр</div>
  <div class="it" style="left:229px">На карте</div>
  <div class="it" style="left:1439px">Обратная связь</div>
  <div class="it" style="left:1605px">Новости</div>
  <div class="it" style="left:1714px">Информация</div>
  <svg class="abs" style="left:1850px;top:14px" width="40" height="40" viewBox="0 0 40 40"><circle cx="16" cy="16" r="6" stroke="#fff" stroke-width="2" fill="none"/><path d="M24.3,23.9 L30,29.6" stroke="#fff" stroke-width="2" stroke-linecap="round"/></svg>

</div>
<div id="top">
  <div class="abs" style="left:24px;top:16px;font-size:14px;color:#888"><span style="letter-spacing:0.113px">Паспорта наборов ›</span></div>
  <div class="abs" style="left:23px;top:49px;font-size:19px;color:#111;letter-spacing:-0.12px">Сведения об объектах культурного наследия местного (муниципального) значения Ханты-Мансийского автономного округа – Югры</div>
  <div class="btn" style="left:24px;top:87px;width:83px;background:linear-gradient(#0a88c6,#136b9b);color:#fff;border-color:#136fa0;text-shadow:0 0 1px rgba(0,0,0,.45);-webkit-text-stroke:0.2px #fff"><span style="letter-spacing:-0.163px">Таблица</span></div>
  <div class="btn" style="left:131px;top:87px;width:129px"><span style="letter-spacing:-0.192px">Паспорт набора</span></div>
  <div class="btn" style="left:284px;top:87px;width:80px"><span style="letter-spacing:-0.103px">Отзывы</span></div>
  <div class="btn" style="left:388px;top:87px;width:55px"><span style="letter-spacing:0.349px">API</span></div>
  <div class="abs" style="left:640px;top:87px;font-size:14px;color:#222"><span style="letter-spacing:0.101px">Просмотров: 1783</span></div>
  <div class="abs" style="left:978px;top:87px;font-size:14px;color:#999"><span style="letter-spacing:0.172px">№ 721221</span></div>
  <div class="btn" style="left:1745px;top:87px;width:134px"><span style="letter-spacing:-0.059px">Добавить объект</span></div>
  <div class="abs" style="left:1243px;top:88px;font-size:13px;color:#3aa328">0</div>
  <div class="pm" style="left:1254px;top:87px"><i style="left:3px;top:6px;width:8px;height:2px"></i><i style="left:6px;top:3px;width:2px;height:8px"></i></div>
  <div class="pm" style="left:1274px;top:87px"><i style="left:3px;top:6px;width:8px;height:2px"></i></div>
  <svg class="abs" style="left:1487px;top:88px" width="62" height="14" viewBox="0 0 62 14"><path d="M7.00,1.10 L8.53,5.20 L12.90,5.38 L9.47,8.10 L10.64,12.32 L7.00,9.90 L3.36,12.32 L4.53,8.10 L1.10,5.38 L5.47,5.20 Z" fill="none" stroke="#bdbdbd" stroke-width="1"/><path d="M19.00,1.10 L20.53,5.20 L24.90,5.38 L21.47,8.10 L22.64,12.32 L19.00,9.90 L15.36,12.32 L16.53,8.10 L13.10,5.38 L17.47,5.20 Z" fill="none" stroke="#bdbdbd" stroke-width="1"/><path d="M31.00,1.10 L32.53,5.20 L36.90,5.38 L33.47,8.10 L34.64,12.32 L31.00,9.90 L27.36,12.32 L28.53,8.10 L25.10,5.38 L29.47,5.20 Z" fill="none" stroke="#bdbdbd" stroke-width="1"/><path d="M43.00,1.10 L44.53,5.20 L48.90,5.38 L45.47,8.10 L46.64,12.32 L43.00,9.90 L39.36,12.32 L40.53,8.10 L37.10,5.38 L41.47,5.20 Z" fill="none" stroke="#bdbdbd" stroke-width="1"/><path d="M55.00,1.10 L56.53,5.20 L60.90,5.38 L57.47,8.10 L58.64,12.32 L55.00,9.90 L51.36,12.32 L52.53,8.10 L49.10,5.38 L53.47,5.20 Z" fill="none" stroke="#bdbdbd" stroke-width="1"/></svg>

</div>

<div id="tb">
  <div class="abs" style="left:24px;top:27px;font-size:13px;font-weight:bold;color:#0a8ac6"><span style="letter-spacing:-0.177px">Атрибуты</span></div>
  <div class="abs" style="left:93px;top:25px;width:18px;height:18px;border-radius:50%;background:#0a8ac6"><i style="position:absolute;left:4px;top:8px;width:10px;height:2px;background:#fff"></i><i style="position:absolute;left:8px;top:4px;width:2px;height:10px;background:#fff"></i></div>
  <div class="abs" style="left:395px;top:16px;width:668px;height:36px;border:1px solid #c4c4c4;border-radius:2px;background:#fff"></div>
  <svg class="abs" style="left:400px;top:21px" width="30" height="30" viewBox="0 0 30 30"><circle cx="12" cy="11" r="5.4" stroke="#999" stroke-width="1.1" fill="none"/><path d="M17.7,17.1 L22.7,21.7" stroke="#999" stroke-width="1.1"/></svg>
  <div class="abs" style="left:431px;top:26px;font-size:13px;color:#999"><span style="letter-spacing:-0.155px">Поиск по набору</span></div>
  <div class="abs" style="left:1566px;top:28px;font-size:13px;color:#777"><span style="letter-spacing:0.041px">Строк: </span><b style="color:#555"><span style="letter-spacing:-0.230px">19</span></b><span style="letter-spacing:0.058px">, показывать по:</span></div>
  <div class="abs" style="left:1732px;top:17px;width:147px;height:36px;border:1px solid #c8c8c8;border-radius:2px;background:#fff"></div>
  <div class="abs" style="left:1766px;top:18px;width:36px;height:34px;background:#888"></div>
  <div class="abs" style="left:1836px;top:18px;width:1px;height:34px;background:#c8c8c8"></div>
  <div class="abs" style="left:1733px;top:27px;width:33px;text-align:center;font-size:14px;color:#222"><span style="letter-spacing:0.214px">10</span></div>
  <div class="abs" style="left:1766px;top:27px;width:36px;text-align:center;font-size:14px;color:#fff"><span style="letter-spacing:0.214px">25</span></div>
  <div class="abs" style="left:1802px;top:27px;width:34px;text-align:center;font-size:14px;color:#222"><span style="letter-spacing:0.214px">50</span></div>
  <div class="abs" style="left:1837px;top:27px;width:42px;text-align:center;font-size:14px;color:#222"><span style="letter-spacing:0.214px">100</span></div>
</div>
<div id="tbl">
<div class="r" style="top:0px;height:64px;background:#fff"></div>
<div class="hl" style="top:64px"></div>
<div class="r" style="top:65px;height:37px;background:#fbfbfb"></div>
<div class="th" style="left:16px;top:16px"><span style="letter-spacing:0.208px">№ п/п</span></div>
<div class="fi" style="left:16px;top:73px;width:118px"></div>
<div class="th" style="left:167px;top:16px"><span style="letter-spacing:0.068px">Субъект Российской Федерации</span></div>
<div class="fi" style="left:167px;top:73px;width:217px"></div>
<div class="th" style="left:417px;top:16px"><span style="letter-spacing:0.139px">Муниципальное</span><br><span style="letter-spacing:0.078px">образование</span></div>
<div class="fi" style="left:417px;top:73px;width:156px"></div>
<div class="th" style="left:606px;top:16px"><span style="letter-spacing:0.112px">Наименование объекта</span></div>
<div class="fi" style="left:606px;top:73px;width:244px"></div>
<div class="th" style="left:883px;top:16px"><span style="letter-spacing:0.098px">Адрес места расположения</span></div>
<div class="fi" style="left:883px;top:73px;width:453px"></div>
<div class="th" style="left:1369px;top:16px"><span style="letter-spacing:0.027px">Дата создания</span><br><span style="letter-spacing:0.084px">(возникновения) объекта</span></div>
<div class="fi" style="left:1369px;top:73px;width:204px"></div>
<div class="th" style="left:1606px;top:16px"><span style="letter-spacing:0.073px">Категория историко-культурного значения: федеральный,</span><br><span style="letter-spacing:0.114px">региональный, местный (муниципальный)</span></div>
<div class="fi" style="left:1606px;top:73px;width:400px"></div>
<div class="vl" style="left:150px;top:0;height:102px"></div>
<div class="vl" style="left:400px;top:0;height:102px"></div>
<div class="vl" style="left:589px;top:0;height:102px"></div>
<div class="vl" style="left:866px;top:0;height:102px"></div>
<div class="vl" style="left:1352px;top:0;height:102px"></div>
<div class="vl" style="left:1589px;top:0;height:102px"></div>
<div class="tk" style="top:102px"></div>
<div class="tk" style="top:273px"></div>
<div class="tk" style="top:447px"></div>
<div class="r" style="top:106px;height:53px;background:#fff"></div>
<div class="hl" style="top:159px"></div>
<div class="vl" style="left:150px;top:106px;height:53px"></div>
<div class="vl" style="left:400px;top:106px;height:53px"></div>
<div class="vl" style="left:589px;top:106px;height:53px"></div>
<div class="vl" style="left:866px;top:106px;height:53px"></div>
<div class="vl" style="left:1352px;top:106px;height:53px"></div>
<div class="vl" style="left:1589px;top:106px;height:53px"></div>
<div class="td" style="left:16px;top:116px"><span style="letter-spacing:0.079px">1.</span></div>
<div class="td" style="left:167px;top:116px"><span style="letter-spacing:-0.139px">Ханты-Мансийский автономный</span><br><span style="letter-spacing:-0.023px">округ - Югра</span></div>
<div class="td" style="left:417px;top:116px"><span style="letter-spacing:-0.102px">сельское поселение</span><br><span style="letter-spacing:-0.082px">Полноват</span></div>
<div class="td" style="left:606px;top:116px"><span style="letter-spacing:-0.101px">Здание церкви Успения Пресвятой</span><br><span style="letter-spacing:-0.083px">Богородицы</span></div>
<div class="td" style="left:883px;top:116px"><span style="letter-spacing:0.051px">с.п. Полноват, ул. Советская, д. 19</span></div>
<div class="td" style="left:1369px;top:116px"><span style="letter-spacing:0.016px">1912 г.</span></div>
<div class="td" style="left:1606px;top:116px"><span style="letter-spacing:-0.160px">местный (муниципальный)</span></div>
<div class="r" style="top:277px;height:56px;background:#fff"></div>
<div class="hl" style="top:333px"></div>
<div class="vl" style="left:150px;top:277px;height:56px"></div>
<div class="vl" style="left:400px;top:277px;height:56px"></div>
<div class="vl" style="left:589px;top:277px;height:56px"></div>
<div class="vl" style="left:866px;top:277px;height:56px"></div>
<div class="vl" style="left:1352px;top:277px;height:56px"></div>
<div class="vl" style="left:1589px;top:277px;height:56px"></div>
<div class="td" style="left:16px;top:290px"><span style="letter-spacing:0.079px">2.</span></div>
<div class="td" style="left:167px;top:290px"><span style="letter-spacing:-0.139px">Ханты-Мансийский автономный</span><br><span style="letter-spacing:-0.023px">округ - Югра</span></div>
<div class="td" style="left:417px;top:290px"><span style="letter-spacing:-0.093px">городское поселение</span><br><span style="letter-spacing:-0.091px">Фёдоровский</span></div>
<div class="td" style="left:606px;top:290px"><span style="letter-spacing:-0.072px">Священное озеро Имлор</span></div>
<div class="td" style="left:883px;top:290px"><span style="letter-spacing:-0.029px">32 км к северо-западу от пгт. Фёдоровский, бассейн р. Моховая</span></div>
<div class="td" style="left:1369px;top:290px"><span style="letter-spacing:0.202px">XIX в. - начало XXI в.</span></div>
<div class="td" style="left:1606px;top:290px"><span style="letter-spacing:-0.160px">местный (муниципальный)</span></div>
<div class="r" style="top:451px;height:56px;background:#fff"></div>
<div class="hl" style="top:507px"></div>
<div class="vl" style="left:150px;top:451px;height:56px"></div>
<div class="vl" style="left:400px;top:451px;height:56px"></div>
<div class="vl" style="left:589px;top:451px;height:56px"></div>
<div class="vl" style="left:866px;top:451px;height:56px"></div>
<div class="vl" style="left:1352px;top:451px;height:56px"></div>
<div class="vl" style="left:1589px;top:451px;height:56px"></div>
<div class="td" style="left:16px;top:464px"><span style="letter-spacing:0.079px">3.</span></div>
<div class="td" style="left:167px;top:464px"><span style="letter-spacing:-0.139px">Ханты-Мансийский автономный</span><br><span style="letter-spacing:-0.023px">округ - Югра</span></div>
<div class="td" style="left:417px;top:464px"><span style="letter-spacing:-0.132px">МО «Сургутский район»</span></div>
<div class="td" style="left:606px;top:464px"><span style="letter-spacing:-0.022px">Здание церкви Богоявления Господня</span></div>
<div class="td" style="left:883px;top:464px"><span style="letter-spacing:0.089px">д. Юган, ул. Центральная</span></div>
<div class="td" style="left:1369px;top:464px"><span style="letter-spacing:0.128px">конец XIX в.</span></div>
<div class="td" style="left:1606px;top:464px"><span style="letter-spacing:-0.160px">местный (муниципальный)</span></div>
<div class="r" style="top:508px;height:56px;background:#fff"></div>
<div class="hl" style="top:564px"></div>
<div class="vl" style="left:150px;top:508px;height:56px"></div>
<div class="vl" style="left:400px;top:508px;height:56px"></div>
<div class="vl" style="left:589px;top:508px;height:56px"></div>
<div class="vl" style="left:866px;top:508px;height:56px"></div>
<div class="vl" style="left:1352px;top:508px;height:56px"></div>
<div class="vl" style="left:1589px;top:508px;height:56px"></div>
<div class="td" style="left:16px;top:521px"><span style="letter-spacing:0.079px">4.</span></div>
<div class="td" style="left:167px;top:521px"><span style="letter-spacing:-0.139px">Ханты-Мансийский автономный</span><br><span style="letter-spacing:-0.023px">округ - Югра</span></div>
<div class="td" style="left:417px;top:521px"><span style="letter-spacing:-0.081px">МО «Берёзовский район»</span></div>
<div class="td" style="left:606px;top:521px"><span style="letter-spacing:-0.022px">Здание церкви Богоявления Господня</span></div>
<div class="td" style="left:883px;top:521px"><span style="letter-spacing:0.101px">д. Щекурья, ул. Панкова, д. 8</span></div>
<div class="td" style="left:1369px;top:521px"><span style="letter-spacing:-0.011px">1875 год</span></div>
<div class="td" style="left:1606px;top:521px"><span style="letter-spacing:-0.160px">местный (муниципальный)</span></div>
<div class="r" style="top:565px;height:59px;background:#fff"></div>
<div class="hl" style="top:624px"></div>
<div class="vl" style="left:150px;top:565px;height:59px"></div>
<div class="vl" style="left:400px;top:565px;height:59px"></div>
<div class="vl" style="left:589px;top:565px;height:59px"></div>
<div class="vl" style="left:866px;top:565px;height:59px"></div>
<div class="vl" style="left:1352px;top:565px;height:59px"></div>
<div class="vl" style="left:1589px;top:565px;height:59px"></div>
<div class="td" style="left:16px;top:577px"><span style="letter-spacing:0.079px">5.</span></div>
<div class="td" style="left:167px;top:577px"><span style="letter-spacing:-0.139px">Ханты-Мансийский автономный</span><br><span style="letter-spacing:-0.023px">округ - Югра</span></div>
<div class="td" style="left:417px;top:577px"><span style="letter-spacing:-0.102px">сельское поселение</span><br><span style="letter-spacing:-0.139px">Саранпауль</span></div>
<div class="td" style="left:606px;top:577px"><span style="letter-spacing:-0.080px">Здание церкви Святой Троицы</span></div>
<div class="td" style="left:883px;top:577px"><span style="letter-spacing:0.006px">пос. Теги, ул. Советская</span></div>
<div class="td" style="left:1369px;top:577px"><span style="letter-spacing:0.120px">конец XVIII в. - 1907 г.</span></div>
<div class="td" style="left:1606px;top:577px"><span style="letter-spacing:-0.160px">местный (муниципальный)</span></div>
<div class="btn" style="left:16px;top:177px;width:86px"><span style="letter-spacing:-0.070px">На карте</span></div>
<div class="btn" style="left:126px;top:177px;width:241px"><span style="letter-spacing:-0.091px">Сообщить о некорректных данных</span></div>
<div class="dot" style="left:16px;top:232px"></div>
<div class="dl" style="left:32px;top:225px"><span style="letter-spacing:0.035px">Реквизиты документа о постановке на государственную охрану:</span></div>
<div class="dd" style="left:32px;top:242px"><span style="letter-spacing:-0.078px">Постановление Правительства Ханты-Мансийского автономного округа-Югры от 14.12.2012 № 506-п</span></div>
<div class="btn" style="left:16px;top:351px;width:86px"><span style="letter-spacing:-0.070px">На карте</span></div>
<div class="btn" style="left:126px;top:351px;width:241px"><span style="letter-spacing:-0.091px">Сообщить о некорректных данных</span></div>
<div class="dot" style="left:16px;top:406px"></div>
<div class="dl" style="left:32px;top:399px"><span style="letter-spacing:0.035px">Реквизиты документа о постановке на государственную охрану:</span></div>
<div class="dd" style="left:32px;top:416px"><span style="letter-spacing:-0.076px">Постановление Правительства Ханты-Мансийского автономного округа-Югры от 07.03.2013 № 71-пп</span></div>
</div>
<div id="sb">
  <svg class="abs" style="left:0;top:0" width="17" height="989" viewBox="0 0 17 989"><path d="M4.5,5 L8.5,1 L12.5,5 Z" fill="#a3a3a3"/><path d="M4.5,976 L8.5,980 L12.5,976 Z" fill="#505050"/></svg>
  <div class="abs" style="left:2px;top:11px;width:13px;height:462px;background:#c1c1c1"></div>
</div>
<div class="abs" style="left:0;top:987px;width:1920px;height:1px;background:#2b6cc6"></div><div class="abs" style="left:0;top:988px;width:1920px;height:1px;background:#368be9"></div>
</div>
</body></html>
